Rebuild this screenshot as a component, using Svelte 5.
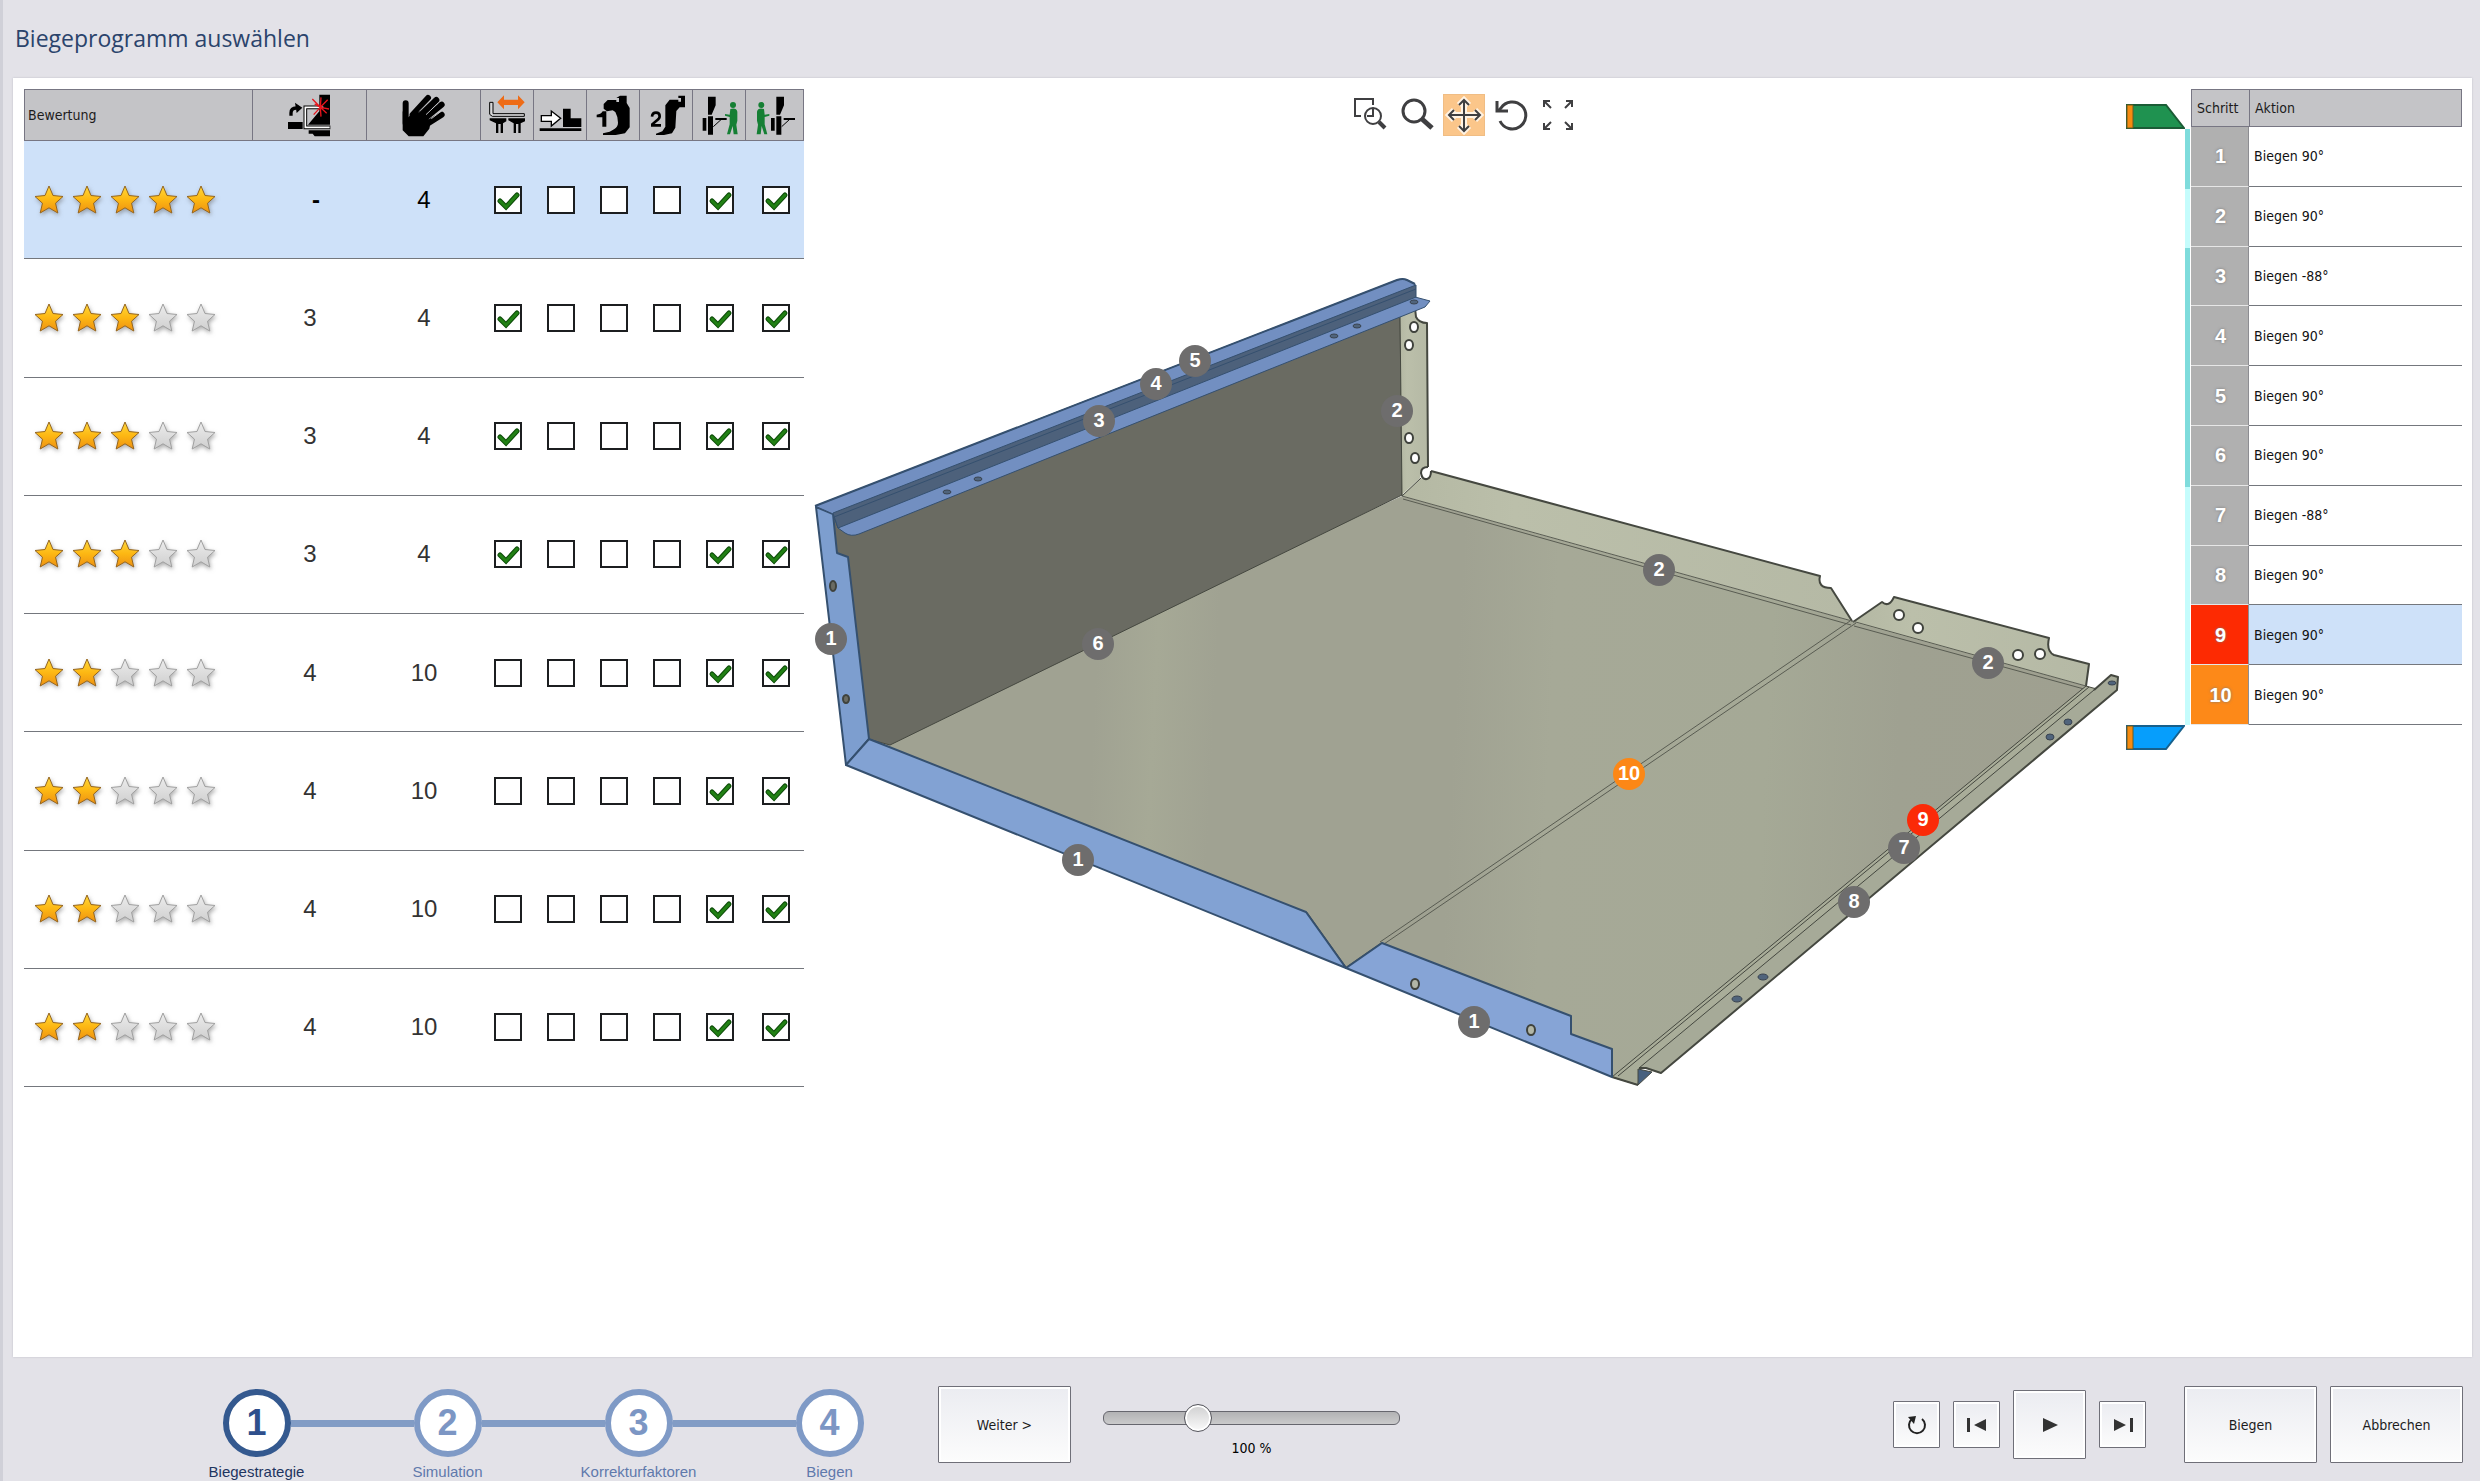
<script>
  const starPath = 'M15 1l4 9.500 10 1-7.500 6.700 2.300 9.800-8.800-5.200-8.800 5.200 2.300-9.800L1 11.500l10-1z';

  const columns = [
    { id: 'collision', label: 'Kollisionen' },
    { id: 'hand', label: 'Manuelle Handhabung' },
    { id: 'turn', label: 'Anschlag verschieben' },
    { id: 'push', label: 'Anschlag vorne' },
    { id: 'tool1', label: 'Werkzeug 1' },
    { id: 'tool2', label: 'Werkzeug 2' },
    { id: 'front', label: 'Bediener vorne' },
    { id: 'back', label: 'Bediener hinten' }
  ];

  const wide = [true, false, false, false, true, true];
  const plain = [false, false, false, false, true, true];
  const programs = [
    { stars: 5, hits: '-', moves: 4, flags: wide },
    { stars: 3, hits: '3', moves: 4, flags: wide },
    { stars: 3, hits: '3', moves: 4, flags: wide },
    { stars: 3, hits: '3', moves: 4, flags: wide },
    { stars: 2, hits: '4', moves: 10, flags: plain },
    { stars: 2, hits: '4', moves: 10, flags: plain },
    { stars: 2, hits: '4', moves: 10, flags: plain },
    { stars: 2, hits: '4', moves: 10, flags: plain }
  ];

  const steps = [90, 90, -88, 90, 90, 90, -88, 90, 90, 90];
  const rail = [
    { rows: 1, dark: true },
    { rows: 1, dark: false },
    { rows: 4, dark: true },
    { rows: 4, dark: false }
  ];

  const badges = [
    [1, 831, 639], [3, 1099, 421], [4, 1156, 384], [5, 1195, 361], [2, 1397, 411],
    [6, 1098, 644], [2, 1659, 570], [2, 1988, 663], [10, 1629, 774], [7, 1904, 848],
    [9, 1923, 820], [8, 1854, 902], [1, 1474, 1022], [1, 1078, 860]
  ];
  const badgeFill = (n) => (n === 9 ? '#fb2a08' : n === 10 ? '#fc8716' : '#6e6d6d');

  const wizard = ['Biegestrategie', 'Simulation', 'Korrekturfaktoren', 'Biegen'];
  let zoom = $state(30);
</script>

<div class="app">
  <h1>Biegeprogramm auswählen</h1>

  <main>
    <table class="programs">
      <colgroup>
        <col class="c-rating" /><col class="c-num" /><col class="c-num" />
        <col class="c-flag" /><col class="c-flag" /><col class="c-flag" /><col class="c-flag" /><col class="c-flag" /><col />
      </colgroup>
      <thead>
        <tr>
          <th class="rating">Bewertung</th>
          {#each columns as c}
            <th aria-label={c.label}>
              {#if c.id === 'collision'}
                <svg width="47" height="45" viewBox="860 275 141 135">
                  <path d="M960 280h32v90h-66l34-40z" />
                  <path d="M928 387h64v18h-46l-6-8h-12zM866 362h44v21h-44z" />
                  <path d="M974 318h-56v60h75" fill="none" stroke="#000" stroke-width="11" />
                  <path d="M972 318h-54v60h73" fill="none" stroke="#fff" stroke-width="5" />
                  <path d="M875 343v-8q0-15 16-15" fill="none" stroke="#000" stroke-width="10" />
                  <path d="M887 304l22 15-17 16z" />
                  <path d="M963 318l-24-25M963 318l2-30M963 318l22-23M963 318l26 5M963 318l19 18M963 318l2 28M963 318l-20 22M963 318l-17-10" stroke="#e8141c" stroke-width="4" />
                </svg>
              {:else if c.id === 'hand'}
                <svg width="47" height="45" viewBox="1202 275 141 135">
                  <path d="M1219 306v60M1240 340l46-50M1255 350l56-54M1265 360l62-50M1270 376l57-36" stroke="#000" stroke-width="18" stroke-linecap="round" />
                  <path d="M1210 330l17 18 18-20 50 30-5 24-18 23h-44l-18-18z" />
                  <path d="M1260 330l38-38M1280 340l37-35M1296 352l36-27" stroke="#c4c4c7" stroke-width="3" />
                </svg>
              {:else if c.id === 'turn'}
                <svg width="53" height="50" viewBox="32 28 159 150">
                  <path d="M81 65l20-21v13h42V44l20 21-20 21V73h-42v13z" fill="#ee6b16" />
                  <path d="M58 65h10v34h94v8H66l-8-6z" fill="#d8d8da" stroke="#000" stroke-width="3" />
                  <path d="M58 113h50v9l-10 6v29h-7v-27h-7v27h-7v-29l-19-9zM114 113h50v9l-13 6v29h-7v-27h-7v27h-7v-29l-16-9z" />
                </svg>
              {:else if c.id === 'push'}
                <svg width="53" height="50" viewBox="193 28 159 150">
                  <path d="M280 84h23v29h32v26h-55zM210 143h125v8H210z" />
                  <path d="M215 105h30V91l28 22-28 23v-14h-30z" fill="#fff" stroke="#000" stroke-width="4" />
                </svg>
              {:else if c.id === 'tool1'}
                <svg width="53" height="50" viewBox="353 28 159 150">
                  <path d="M400 92h11v46h-12v-28h-17v-8q12 0 18-10z" />
                  <path d="M452 45h20v22l9 15v58l-14 18-28 5h-38v-5l20-5 13-7q12-8 12-20 0-18-8-32l-8-5-17 3-10-8V70l12-12h26v6h8V52h-8z" />
                </svg>
              {:else if c.id === 'tool2'}
                <svg width="53" height="50" viewBox="513 28 159 150">
                  <path d="M549 108q1-12 12-12t11 11q0 7-8 12l-14 12v3h26" fill="none" stroke="#000" stroke-width="8" />
                  <path d="M628 45h20v35h-16l-10 11-3 50-10 17-24 5h-24v-4l19-7 9-14V74l13-17h26v6h8V52h-8z" />
                </svg>
              {:else}
                <svg width="53" height="50" viewBox={c.id === 'front' ? '673 28 159 150' : '836 28 159 150'}>
                  <g transform={c.id === 'front' ? null : 'translate(203 0)'}>
                    <path d="M718 48h23v26l-12 28h-11zM718 107h15v55h-15zM702 112h11v38h-11z" />
                    <path d="M740 115h34" stroke="#000" stroke-width="6" />
                    <path d="M734 138l24-22" stroke="#000" stroke-width="3" />
                  </g>
                  <g fill="#157f34" transform={c.id === 'front' ? null : 'matrix(-1 0 0 1 1669 0)'}>
                    <circle cx="793" cy="73" r="9" />
                    <path d="M785 85q18-5 21 8v27l-3 12 4 29h-12l-3-25-8 25h-9l8-30v-22l-14-4v-5l14 2z" />
                  </g>
                </svg>
              {/if}
            </th>
          {/each}
        </tr>
      </thead>
      <tbody>
        {#each programs as p, i}
          <tr class:selected={i === 0}>
            <td>
              <div class="stars" role="img" aria-label="{p.stars} von 5">
                {#each [1, 2, 3, 4, 5] as n}
                  <svg class="star" class:on={n <= p.stars} width="30" height="30" viewBox="0 0 30 30">
                    <defs>
                      <linearGradient id="gold" x1="0" y1="0" x2="0" y2="1"><stop offset="0" stop-color="#ffd83c" /><stop offset=".5" stop-color="#fdb813" /><stop offset="1" stop-color="#ee9112" /></linearGradient>
                      <linearGradient id="silver" x1="0" y1="0" x2="0" y2="1"><stop offset="0" stop-color="#ececec" /><stop offset="1" stop-color="#cfcfcf" /></linearGradient>
                    </defs>
                    <path d={starPath} fill={n <= p.stars ? 'url(#gold)' : 'url(#silver)'} />
                  </svg>
                {/each}
              </div>
            </td>
            <td class="num" class:none={p.hits === '-'}>{p.hits}</td>
            <td class="num">{p.moves}</td>
            {#each p.flags as flag, f}
              <td class="flag">
                <label class="check">
                  <input type="checkbox" checked={flag} aria-label={columns[f + 2].label} />
                  <svg width="28" height="28" viewBox="0 0 28 28"><path d="M6 15l6 6L23 9" fill="none" stroke="#0c4a08" stroke-width="5" stroke-linecap="round" /><path d="M6 15l6 6L23 9" fill="none" stroke="#218014" stroke-width="3" stroke-linecap="round" /></svg>
                </label>
              </td>
            {/each}
          </tr>
        {/each}
      </tbody>
    </table>

    <section class="viewer">
      <div class="tools">
        <button aria-label="Bereich vergrößern">
          <svg width="42" height="42" viewBox="0 0 42 42"><path d="M12 22H6V5h18v6M24 15v7h-6" /><circle cx="24" cy="22" r="8" /><path d="M30 28l6 6" stroke-width="4" /></svg>
        </button>
        <button aria-label="Zoom">
          <svg width="42" height="42" viewBox="0 0 42 42"><circle cx="18" cy="17" r="11" stroke-width="3" /><path d="M26 25l10 9" stroke-width="5" /></svg>
        </button>
        <button class="active" aria-label="Verschieben">
          <svg width="42" height="42" viewBox="0 0 42 42"><path class="halo" d="M21 6v31M6 21h31M16 11l5-5 5 5M16 32l5 5 5-5M11 16l-5 5 5 5M32 16l5 5-5 5" /><path d="M21 6v31M6 21h31M16 11l5-5 5 5M16 32l5 5 5-5M11 16l-5 5 5 5M32 16l5 5-5 5" /></svg>
        </button>
        <button aria-label="Drehen">
          <svg width="42" height="42" viewBox="0 0 42 42"><path d="M10 27a13.500 13.500 0 1 0 1-13l-3 3" stroke-width="3" /><path d="M7 7v10h11" stroke-width="3" /></svg>
        </button>
        <button aria-label="Einpassen">
          <svg width="42" height="42" viewBox="0 0 42 42"><path d="M7 13V7h6M7 7l7 7M29 7h6v6M35 7l-7 7M7 29v6h6M7 35l7-7M35 29v6h-6M35 35l-7-7" /></svg>
        </button>
      </div>

      <svg class="model" viewBox="804 140 1322 960" role="img" aria-label="Biegeteil">
        <defs>
          <linearGradient id="floor" gradientUnits="userSpaceOnUse" x1="890" y1="700" x2="2090" y2="760">
            <stop offset="0" stop-color="#a0a292" /><stop offset=".17" stop-color="#a0a292" />
            <stop offset=".22" stop-color="#a6a996" /><stop offset=".27" stop-color="#a0a292" />
            <stop offset=".47" stop-color="#a0a292" /><stop offset=".55" stop-color="#a6a997" />
            <stop offset=".73" stop-color="#a5a996" /><stop offset=".84" stop-color="#9fa191" /><stop offset="1" stop-color="#9fa090" />
          </linearGradient>
          <linearGradient id="rim" x1="0" y1="0" x2="1" y2="0">
            <stop offset="0" stop-color="#b4b8a3" /><stop offset=".25" stop-color="#bbbfaa" /><stop offset="1" stop-color="#b5b9a5" />
          </linearGradient>
        </defs>
        <g stroke="#454840" stroke-width="2" stroke-linejoin="round">
          <path fill="url(#floor)" stroke="none" d="M869 739L1402 496l684 190 7 2-480 389-68-30-199-79-60-40z" />
          <path fill="#6a6b62" stroke-width="1" d="M833 520l567-210 2 185L890 745l-22-6-23-183-12-4z" />
          <path fill="url(#rim)" stroke="none" d="M1400 314l15-6 1 9q3 6 11 6l1 144q-9-1-8 11l-18 17z" />
          <path fill="url(#rim)" stroke="none" d="M1402 496l18-18q10 4 11-7l389 105q-3 12 11 12l21 33z" />
          <path fill="url(#rim)" stroke="none" d="M1853 622l29-20q7 6 12-5l155 41q-3 13 5 17l35 9-3 22z" />
          <path fill="none" d="M1415 308l1 9q3 6 11 6l1 144M1431 471l389 105q-3 12 11 12l21 33" />
          <path fill="none" d="M1853 622l29-20q7 6 12-5l155 41q-3 13 5 17l35 9-3 22" />
          <path fill="none" stroke-width="1" d="M1400 314l2 182 19-18" />
          <path fill="none" stroke="#595c52" stroke-width="1" d="M1402 496l684 190M1403 499l448 126M1854 626l230 63" />
          <path fill="none" stroke="#595c52" stroke-width="1" d="M1850 621L1380 942M1856 623L1384 944" />
          <path fill="none" d="M1382 943l-36 25-40-56" />

          <path fill="#a9ad99" stroke-width="1" d="M2086 686l7 2 5 1-458 381-2 15-26-8z" />
          <path fill="none" stroke-width="1" d="M2089 687L1618 1076" />
          <path fill="#a6aa98" stroke="none" d="M2094 690l17-15 7 2-1 13-456 383-15-5h-7z" />
          <path fill="none" d="M2094 690l17-15 7 2-1 13-456 383-15-5h-7M1612 1077l26 8" />
          <path fill="none" stroke-width="1" d="M2094 690L1639 1068" />
          <path fill="#48617f" stroke-width="1" d="M1638 1069l14 3-14 13z" />
        </g>
        <g stroke="#35506f" stroke-width="2" stroke-linejoin="round">
          <path fill="#7d9ecf" d="M816 507l17 7 4 39 11 4 21 182-23 26z" />
          <path fill="#82a2d3" d="M869 739l437 173 40 56-500-203z" />
          <path fill="#86a4d6" d="M1382 943l189 73v18l41 15v28l-266-109z" />
          <path fill="#728fc1" stroke-width="1" d="M815 506l582-226q6-2 10 0l8 4v13l15 4-5 6L859 534q-8 3-14-1l-7-5-5-14z" />
          <path fill="#4d617b" stroke-width="1" d="M833 513l583-228v12L838 528z" />
          <path fill="none" stroke-width="2" d="M815 506l582-226q6-2 10 0l8 4" />
          <path fill="none" stroke-width="1" d="M834 517l582-228" />
          <path fill="none" stroke-width="1" d="M846 765l23-26" />
        </g>
        <g stroke="#3f423c" stroke-width="2" fill="#6a6b62">
          <ellipse cx="833" cy="586" rx="3" ry="5" /><ellipse cx="846" cy="699" rx="3" ry="4" />
          <g fill="#b2b6a6"><ellipse cx="1415" cy="984" rx="4" ry="5" /><ellipse cx="1531" cy="1030" rx="4" ry="5" /></g>
          <g fill="#fff">
            <ellipse cx="1414" cy="327" rx="4" ry="5" /><ellipse cx="1409" cy="345" rx="4" ry="5" />
            <ellipse cx="1409" cy="438" rx="4" ry="5" /><ellipse cx="1415" cy="458" rx="4" ry="5" />
            <ellipse cx="1899" cy="615" rx="5" ry="5" /><ellipse cx="1918" cy="628" rx="5" ry="5" />
            <ellipse cx="2018" cy="655" rx="5" ry="5" /><ellipse cx="2040" cy="654" rx="5" ry="5" />
          </g>
        </g>
        <path fill="#fff" stroke="#3f423c" stroke-width="2" d="M1428 467q-7 0-7 6 1 7 6 6 4-1 4-8" />
        <g stroke="#3a4450" fill="#50647c">
          <ellipse cx="2112" cy="683" rx="4" ry="2" /><ellipse cx="2068" cy="722" rx="4" ry="3" /><ellipse cx="2050" cy="737" rx="4" ry="3" />
          <ellipse cx="1763" cy="977" rx="5" ry="3" /><ellipse cx="1737" cy="999" rx="5" ry="3" />
          <ellipse cx="947" cy="492" rx="4" ry="2" /><ellipse cx="978" cy="479" rx="4" ry="2" />
          <ellipse cx="1334" cy="336" rx="4" ry="2" /><ellipse cx="1357" cy="326" rx="4" ry="2" /><ellipse cx="1414" cy="302" rx="4" ry="2" />
        </g>
        {#each badges as [n, x, y]}
          <circle cx={x} cy={y} r="16" fill={badgeFill(n)} />
          <text class="badge" {x} y={y + 6}>{n}</text>
        {/each}
      </svg>
    </section>

    <section class="sequence">
      <div class="markers">
        <svg width="59" height="25" viewBox="0 0 59 25"><path d="M0 1h40l18 23H0z" fill="#1f9250" stroke="#1b5c36" stroke-width="2" /><path d="M1 1h6v23H1z" fill="#f78b10" stroke="#6b5a20" /></svg>
        <div class="rail">
          {#each rail as r}
            <i class:dark={r.dark} style="flex-grow: {r.rows}"></i>
          {/each}
        </div>
        <svg class="end" width="59" height="25" viewBox="0 0 59 25"><path d="M0 1h58L40 24H0z" fill="#069efc" stroke="#17608c" stroke-width="2" /><path d="M1 1h6v23H1z" fill="#f78b10" stroke="#6b5a20" /></svg>
      </div>
      <table class="steps">
        <thead><tr><th class="c-step">Schritt</th><th>Aktion</th></tr></thead>
        <tbody>
          {#each steps as angle, i}
            <tr class:current={i === 8} class:next={i === 9}>
              <td class="index">{i + 1}</td>
              <td class="action">Biegen {angle}°</td>
            </tr>
          {/each}
        </tbody>
      </table>
    </section>
  </main>

  <footer>
    <ol class="wizard">
      {#each wizard as name, i}
        <li class:current={i === 0}>
          <div class="node"><span class="dot">{i + 1}</span></div>
          <span class="name">{name}</span>
        </li>
      {/each}
    </ol>
    <button class="btn big">Weiter &gt;</button>
    <label class="zoom">
      <input type="range" min="0" max="100" bind:value={zoom} />
      <span>100 %</span>
    </label>
    <div class="player">
      <button class="btn small" aria-label="Neu starten">
        <svg width="24" height="24" viewBox="0 0 24 24"><path d="M17 6a8 8 0 1 1-10 0" fill="none" stroke="#222" stroke-width="2" /><path d="M3 4l8-1-2 8z" fill="#222" /></svg>
      </button>
      <button class="btn small" aria-label="Zurück">
        <svg width="24" height="24" viewBox="0 0 24 24"><path d="M2 5h3v14H2zM21 6v12L9 12z" fill="#333" /></svg>
      </button>
      <button class="btn play" aria-label="Abspielen">
        <svg width="24" height="24" viewBox="0 0 24 24"><path d="M5 5v14l15-7z" fill="#333" /></svg>
      </button>
      <button class="btn small" aria-label="Weiter">
        <svg width="24" height="24" viewBox="0 0 24 24"><path d="M19 5h3v14h-3zM3 6v12l12-6z" fill="#333" /></svg>
      </button>
    </div>
    <button class="btn big">Biegen</button>
    <button class="btn big last">Abbrechen</button>
  </footer>
</div>

<style>
  :global(body) { margin: 0; background: #e3e2e8; }
  .app {
    display: flex; flex-direction: column; min-height: 100vh; box-sizing: border-box;
    border-left: 3px solid #d0d0d8; background: #e3e2e8; color: #1c1c1c;
    font: 14px/18px "DejaVu Sans Condensed", "DejaVu Sans", sans-serif; font-stretch: condensed;
  }
  h1 { margin: 0; padding: 22px 12px 24px; font: 400 23px/32px "Open Sans", "Noto Sans", sans-serif; color: #2b446c; }
  main {
    flex: 1; display: grid; grid-template-columns: 780px minmax(0, 1fr) 336px; align-items: start;
    margin: 0 8px 0 10px; padding: 11px 10px 11px 11px; background: #fff; box-shadow: 0 0 2px #bdbdc6;
  }
  table { border-spacing: 0; table-layout: fixed; width: 100%; }
  th {
    padding: 0; background: #c4c4c7; font-weight: 400; text-align: left;
    border: solid #777683; border-width: 1px 0 1px 1px; box-sizing: border-box;
  }
  th:last-child { border-right-width: 1px; }
  td { padding: 0; border-bottom: 1px solid #74777d; }

  .programs { height: 998px; }
  .programs th { height: 51px; text-align: center; }
  .programs th.rating { text-align: left; padding-left: 3px; }
  .programs th svg { display: block; margin: 0 auto; }
  .programs td { text-align: center; }
  .c-rating { width: 228px; }
  .c-num { width: 114px; }
  .c-flag { width: 53px; }
  .selected td { background: #cee1f9; }
  .programs .num { padding-left: 2px; font: 24px/28px "Liberation Sans", Arial, sans-serif; color: #333; }
  .programs .flag { padding-left: 2px; }
  .programs .selected .num { color: #000; }
  .programs .none { padding-left: 14px; font-weight: 700; }
  .stars { display: flex; gap: 8px; padding-left: 10px; }
  .star { stroke: #a0a0a0; filter: drop-shadow(1px 2px 2px #6668); }
  .star.on { stroke: #94651f; }
  .check { display: inline-grid; vertical-align: middle; }
  .check > * { grid-area: 1 / 1; }
  .check input { appearance: none; margin: 0; width: 28px; height: 28px; border: 2px solid #1c1e20; background: #fff; }
  .check svg { visibility: hidden; pointer-events: none; }
  .check input:checked + svg { visibility: visible; }

  .viewer { padding-top: 5px; }
  .tools { display: flex; justify-content: center; gap: 5px; margin-right: 2px; }
  .tools button { width: 42px; height: 42px; padding: 0; border: 0; background: none; }
  .tools .active { background: #fbc68a; outline: 1px solid #f0bd84; outline-offset: -1px; }
  .tools svg { display: block; fill: none; stroke: #3f3f41; stroke-width: 2; }
  .tools .active path { stroke-width: 2; }
  .tools .active .halo { stroke: #fff3e4; stroke-width: 6; }
  .model { display: block; width: 100%; margin-top: 4px; }
  .badge { font: 700 20px "Liberation Sans", Arial, sans-serif; fill: #fff; text-anchor: middle; }

  .sequence { display: flex; }
  .markers { display: flex; flex-direction: column; width: 65px; padding-top: 15px; }
  .markers svg { display: block; flex: none; }
  .markers .end { margin-bottom: -25px; }
  .rail { flex: 1; display: flex; flex-direction: column; width: 5px; margin-left: 59px; }
  .rail i { background: #c5fcfc; }
  .rail .dark { background: #7fdcdc; }
  .steps { flex: 1; height: 636px; }
  .steps th { height: 38px; padding-left: 5px; }
  .steps .c-step { width: 58px; }
  .action { padding-left: 5px; color: #111; }
  .index {
    padding-left: 2px; text-align: center; color: #fff; background: #b0b0b0; font: 700 20px/24px "Liberation Sans", Arial, sans-serif;
    border-right: 1px solid #8d8d92; border-bottom-color: #e6e6e6; text-shadow: 0 0 3px #777;
  }
  .current .index { background: #fd2a02; }
  .current .action { background: #cee1f9; }
  .next .index { background: #fd8918; }

  footer { display: flex; align-items: flex-start; height: 95px; padding: 29px 17px 0 158px; }
  .wizard { display: flex; list-style: none; margin: 0 13px 0 0; padding: 3px 0 0; }
  .wizard li { width: 191px; text-align: center; color: #5f79ac; font: 15px/16px "Liberation Sans", Arial, sans-serif; }
  .node { display: grid; grid-template-columns: 1fr 68px 1fr; align-items: center; margin-bottom: 7px; }
  .node::before, .node::after { content: ""; height: 7px; background: #829cc5; }
  li:first-child .node::before, li:last-child .node::after { visibility: hidden; }
  .dot {
    box-sizing: border-box; height: 68px; border: 6px solid #7f9ac6; border-radius: 50%; background: #fff;
    color: #7c96c4; font: 700 36px/56px "Liberation Sans", Arial, sans-serif;
  }
  .wizard .current { color: #1e3560; }
  .current .dot { border-color: #34598f; color: #2e4f8c; }
  .btn {
    display: grid; place-items: center; box-sizing: border-box; padding: 0; border: 1px solid #6f6f78; border-radius: 1px;
    background: linear-gradient(#ebecf1, #fcfcfc); box-shadow: inset 0 0 0 2px #fff; font: inherit; color: #1c1c1c;
  }
  .big { width: 133px; height: 77px; flex: none; }
  .small { width: 47px; height: 47px; }
  .play { width: 73px; height: 69px; }
  .last { margin-left: 13px; }
  .zoom { display: flex; flex-direction: column; align-items: center; width: 297px; margin-left: 32px; padding-top: 18px; color: #000; }
  .zoom span { margin-top: 7px; }
  .zoom input { appearance: none; width: 100%; height: 28px; margin: 0; background: none; }
  .zoom input::-webkit-slider-runnable-track {
    box-sizing: border-box; height: 14px; border: 1px solid #66666e; border-radius: 6px; background: linear-gradient(#b2b2b4, #cacacb);
  }
  .zoom input::-webkit-slider-thumb {
    appearance: none; box-sizing: border-box; width: 28px; height: 28px; margin-top: -8px;
    border: 1px solid #55555c; border-radius: 50%; background: linear-gradient(#cfcfd0, #fbfbfb); box-shadow: inset 0 0 0 2px #fff;
  }
  .player { display: flex; align-items: center; gap: 13px; height: 77px; margin: 0 38px 0 auto; }
</style>
